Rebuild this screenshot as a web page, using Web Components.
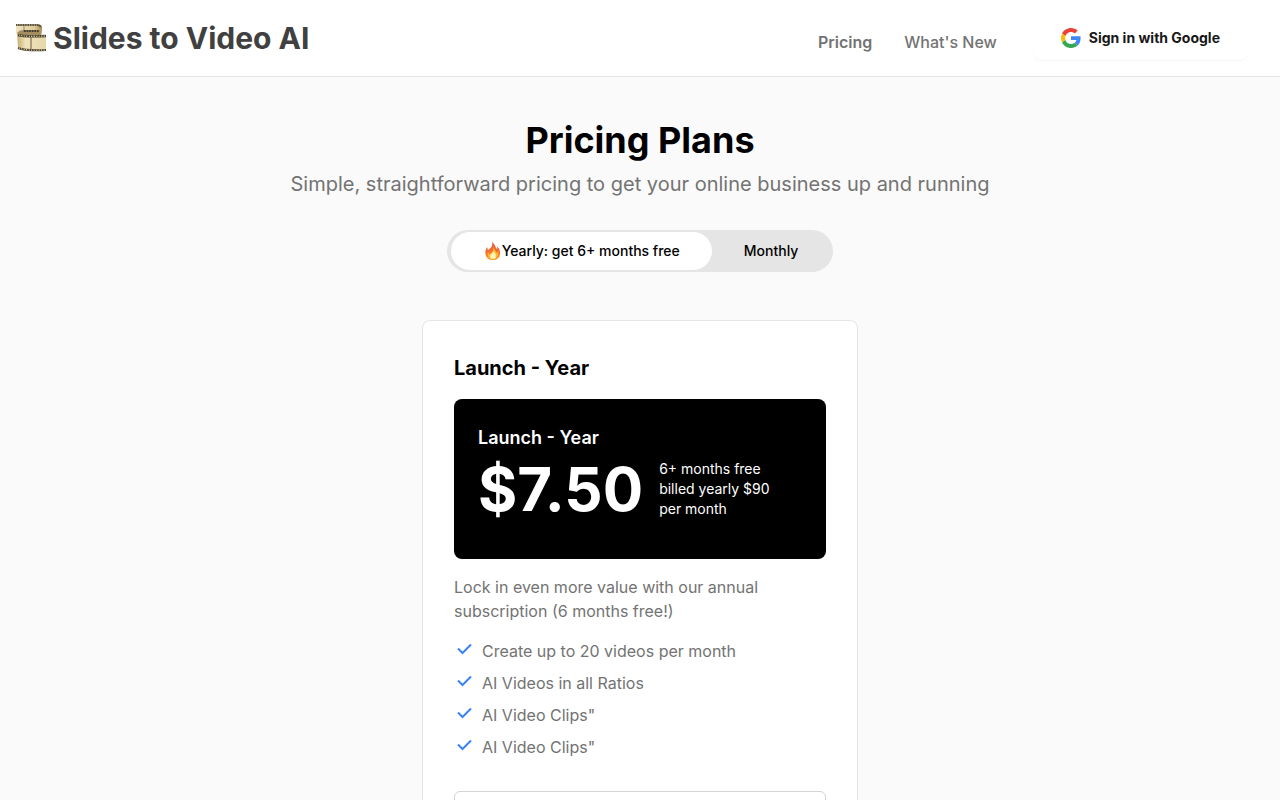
<!DOCTYPE html>
<html lang="en">
<head>
<meta charset="utf-8">
<meta name="viewport" content="width=device-width, initial-scale=1">
<title>Slides to Video AI - Pricing</title>
<style>
	body {
		margin: 0;
		background: #fafafa;
		color: #000;
		font-family: Inter, "Liberation Sans", sans-serif;
		font-size: 16px;
		line-height: 24px;
		--muted: #737373;
		--line: #e5e5e5;
	}
</style>
</head>
<body>
<site-header></site-header>
<pricing-page>
	<span slot="title">Pricing Plans</span>
	<span slot="subtitle">Simple, straightforward pricing to get your online business up and running</span>
	<plan-toggle slot="toggle"></plan-toggle>
	<plan-card name="Launch - Year" price="$7.50">
		<span slot="billing">6+ months free</span>
		<span slot="billing">billed yearly $90</span>
		<span slot="billing">per month</span>
		<span slot="description">Lock in even more value with our annual subscription (6 months free!)</span>
		<plan-feature>Create up to 20 videos per month</plan-feature>
		<plan-feature>AI Videos in all Ratios</plan-feature>
		<plan-feature>AI Video Clips"</plan-feature>
		<plan-feature>AI Video Clips"</plan-feature>
	</plan-card>
</pricing-page>

<script>
class SiteHeader extends HTMLElement {
	constructor() {
		super()
		this.attachShadow({ mode: 'open' })
		this.shadowRoot.innerHTML = `
			<style>
				:host {
					display: block;
					background: #fff;
					border-bottom: 1px solid var(--line);
				}
				header {
					display: flex;
					align-items: center;
					justify-content: space-between;
					height: 76px;
					padding: 0 32px 0 16px;
				}
				a {
					color: var(--muted);
					text-decoration: none;
				}
				.brand {
					display: flex;
					align-items: center;
					gap: 7px;
					color: #404040;
					font-size: 30px;
					font-weight: 700;
					line-height: 36px;
				}
				nav {
					display: flex;
					align-items: center;
					gap: 36px;
				}
				.links {
					display: flex;
					gap: 32px;
					padding-top: 8px;
				}
				.links a {
					font-weight: 500;
				}
				.links a.current {
					font-weight: 600;
				}
			</style>
			<header>
				<a class="brand" href="#"><film-icon></film-icon>Slides to Video AI</a>
				<nav>
					<div class="links">
						<a class="current" href="#pricing">Pricing</a>
						<a href="#news">What's New</a>
					</div>
					<google-button>Sign in with Google</google-button>
				</nav>
			</header>
		`
	}
}
customElements.define('site-header', SiteHeader)


class FilmIcon extends HTMLElement {
	constructor() {
		super()
		this.attachShadow({ mode: 'open' })
		this.shadowRoot.innerHTML = `
			<style>
				:host { display: block; }
				svg { display: block; }
			</style>
			<svg width="30" height="30" viewBox="0 0 30 30" aria-hidden="true">
				<defs>
					<linearGradient id="film" x1="0" x2="1" y1="0" y2="0">
						<stop offset="0" stop-color="#c8ac70"/>
						<stop offset=".3" stop-color="#f0e3bb"/>
						<stop offset="1" stop-color="#e6d7ab"/>
					</linearGradient>
					<linearGradient id="back" x1="0" x2="1" y1="0" y2="0">
						<stop offset="0" stop-color="#efe4c2"/>
						<stop offset=".7" stop-color="#dccb9b"/>
						<stop offset="1" stop-color="#a48c58"/>
					</linearGradient>
				</defs>
				<!-- upper strip, curling down at the right -->
				<path d="M0 1H21Q27 2 26 7L25 14H2L0 10Z" fill="url(#back)"/>
				<path d="M0 2H21Q24 2 25 4" fill="none" stroke="#5d503a" stroke-width="2"/>
				<path d="M1 2H21" fill="none" stroke="#f2e9cd" stroke-width="1.200" stroke-dasharray="1 1.400"/>
				<path d="M8 3V7" stroke="#a18b5c" stroke-width="1"/>
				<!-- inner loop -->
				<path d="M1 10Q3 7 8 7H24Q26 10 23 13H3Z" fill="#a48e60"/>
				<path d="M7 8H23" stroke="#43392a" stroke-width="2"/>
				<path d="M7 8H23" stroke="#d4c296" stroke-width="1" stroke-dasharray="1 1.600"/>
				<!-- front strip -->
				<path d="M1 9Q2 13 12 13L30 12V28H13Q4 28 2 25Z" fill="url(#film)"/>
				<path d="M2 12Q8 14 30 13" fill="none" stroke="#4a3f2d" stroke-width="2.400"/>
				<path d="M3 12Q9 14 30 13" fill="none" stroke="#f0e4c0" stroke-width="1.200" stroke-dasharray="1 1.500"/>
				<path d="M2 25Q10 28 30 27" fill="none" stroke="#4a3f2d" stroke-width="2"/>
				<path d="M3 25Q10 28 30 27" fill="none" stroke="#f0e4c0" stroke-width="1.200" stroke-dasharray="1 1.500"/>
				<path d="M15 14V26" stroke="#6d5b38" stroke-width="1"/>
			</svg>
		`
	}
}
customElements.define('film-icon', FilmIcon)


class GoogleButton extends HTMLElement {
	constructor() {
		super()
		this.attachShadow({ mode: 'open' })
		this.shadowRoot.innerHTML = `
			<style>
				:host { display: block; }
				button {
					display: flex;
					align-items: center;
					gap: 8px;
					height: 44px;
					padding: 0 28px;
					border: 0;
					border-radius: 8px;
					background: #fff;
					box-shadow: 0 1px 1px rgb(0 0 0 / 4%);
					color: #171717;
					font: 700 14px/20px Inter, "Liberation Sans", sans-serif;
					cursor: pointer;
				}
			</style>
			<button type="button">
				<svg width="20" height="20" viewBox="0 0 48 48" aria-hidden="true">
					<path fill="#EA4335" d="M24 9.500c3.540 0 6.710 1.220 9.210 3.600l6.850-6.850C35.900 2.380 30.470 0 24 0 14.620 0 6.510 5.380 2.560 13.220l7.980 6.190C12.430 13.720 17.740 9.500 24 9.500z"/>
					<path fill="#4285F4" d="M46.980 24.550c0-1.570-.150-3.090-.380-4.550H24v9.020h12.940c-.580 2.960-2.260 5.480-4.780 7.180l7.730 6c4.510-4.180 7.090-10.360 7.090-17.650z"/>
					<path fill="#FBBC05" d="M10.530 28.590c-.480-1.450-.760-2.990-.760-4.590s.270-3.140.760-4.590l-7.980-6.190C.920 16.460 0 20.120 0 24c0 3.880.920 7.540 2.560 10.780l7.970-6.190z"/>
					<path fill="#34A853" d="M24 48c6.480 0 11.930-2.130 15.890-5.810l-7.730-6c-2.150 1.450-4.920 2.300-8.160 2.300-6.260 0-11.570-4.220-13.470-9.910l-7.980 6.190C6.510 42.620 14.620 48 24 48z"/>
				</svg>
				<slot></slot>
			</button>
		`
	}
}
customElements.define('google-button', GoogleButton)


class PricingPage extends HTMLElement {
	constructor() {
		super()
		this.attachShadow({ mode: 'open' })
		this.shadowRoot.innerHTML = `
			<style>
				:host { display: block; }
				main {
					display: flex;
					flex-direction: column;
					align-items: center;
					padding: 43px 16px 48px;
				}
				h1 {
					margin: 0;
					font-size: 36px;
					font-weight: 700;
					line-height: 40px;
					text-align: center;
				}
				p {
					margin: 10px 0 0;
					color: var(--muted);
					font-size: 20px;
					line-height: 28px;
					text-align: center;
				}
				.toggle {
					margin: 32px 0 48px;
				}
				.plans {
					width: 100%;
					max-width: 436px;
				}
			</style>
			<main>
				<h1><slot name="title"></slot></h1>
				<p><slot name="subtitle"></slot></p>
				<div class="toggle"><slot name="toggle"></slot></div>
				<div class="plans"><slot></slot></div>
			</main>
		`
	}
}
customElements.define('pricing-page', PricingPage)


class PlanToggle extends HTMLElement {
	constructor() {
		super()
		this.attachShadow({ mode: 'open' })
		this.shadowRoot.innerHTML = `
			<style>
				:host { display: block; }
				div {
					display: flex;
					padding: 2px 3px 2px 4px;
					border-radius: 24px;
					background: var(--line);
				}
				button {
					display: flex;
					align-items: center;
					gap: 1px;
					height: 38px;
					padding: 0 32px;
					border: 0;
					border-radius: 20px;
					background: none;
					color: #000;
					font: 500 14px/20px Inter, "Liberation Sans", sans-serif;
					cursor: pointer;
				}
				button[aria-pressed="true"] {
					background: #fff;
				}
			</style>
			<div role="group" aria-label="Billing period">
				<button type="button" aria-pressed="true">
					<svg width="18" height="18" viewBox="0 0 18 18" aria-hidden="true">
						<defs>
							<linearGradient id="fire" x1="0" x2="0" y1="0" y2="1">
								<stop offset="0" stop-color="#e8553c"/>
								<stop offset=".6" stop-color="#f8702f"/>
								<stop offset="1" stop-color="#ffa52c"/>
							</linearGradient>
						</defs>
						<path fill="url(#fire)" d="M9 0C12 2 12 5 14 7C15 6 14 5 14 4C16 6 17.500 9 17 12C16.500 16 14 18 10 18C6 18 3 16 2.500 12C2 9 3 7 4 5C4.500 6 4.500 7 5 8C8 6 10 4 9 0Z"/>
						<path fill="#ffb62e" d="M10 5C12 7 12 9 14 11C15 10 15 9 15 8C16 12 15 17 10 17C6 17 4 14 5 10C6 11 6 12 7 12C9 10 11 9 10 5Z"/>
						<path fill="#fff3b0" d="M10 9C12 11 13 12 13 14C13 16 12 17 10 17C8 17 7 16 7 14C7 12 10 12 10 9Z"/>
					</svg>
					Yearly: get 6+ months free
				</button>
				<button type="button" aria-pressed="false">Monthly</button>
			</div>
		`
	}
	connectedCallback() {
		const buttons = this.shadowRoot.querySelectorAll('button')
		buttons.forEach(button => {
			button.addEventListener('click', () => {
				buttons.forEach(item => item.setAttribute('aria-pressed', item===button))
			})
		})
	}
}
customElements.define('plan-toggle', PlanToggle)


class PlanCard extends HTMLElement {
	constructor() {
		super()
		this.attachShadow({ mode: 'open' })
		this.shadowRoot.innerHTML = `
			<style>
				:host {
					display: block;
					padding: 31px;
					border: 1px solid var(--line);
					border-radius: 8px;
					background: #fff;
				}
				h2 {
					margin: 0;
					font-size: 20px;
					font-weight: 700;
					line-height: 32px;
				}
				.banner {
					margin: 15px 0 16px;
					padding: 24px 24px 34px;
					border-radius: 8px;
					background: #000;
					color: #fff;
				}
				h3 {
					margin: 0;
					font-size: 18px;
					font-weight: 600;
					line-height: 30px;
				}
				.amount {
					display: flex;
					align-items: center;
					gap: 16px;
				}
				.price {
					font-size: 60px;
					font-weight: 700;
					line-height: 72px;
				}
				.billing {
					display: flex;
					flex-direction: column;
					font-size: 14px;
					line-height: 20px;
				}
				p {
					margin: 0;
					color: var(--muted);
				}
				.features {
					display: flex;
					flex-direction: column;
					gap: 8px;
					margin: 16px 0 32px;
				}
				button {
					display: block;
					width: 100%;
					height: 42px;
					border: 1px solid #d4d4d4;
					border-radius: 6px;
					background: #fff;
				}
			</style>
			<h2></h2>
			<div class="banner">
				<h3></h3>
				<div class="amount">
					<div class="price"></div>
					<div class="billing"><slot name="billing"></slot></div>
				</div>
			</div>
			<p><slot name="description"></slot></p>
			<div class="features" role="list"><slot></slot></div>
			<button type="button" aria-label="Choose plan"></button>
		`
	}
	connectedCallback() {
		const name = this.getAttribute('name')
		this.shadowRoot.querySelector('h2').textContent = name
		this.shadowRoot.querySelector('h3').textContent = name
		this.shadowRoot.querySelector('.price').textContent = this.getAttribute('price')
	}
}
customElements.define('plan-card', PlanCard)


class PlanFeature extends HTMLElement {
	constructor() {
		super()
		this.attachShadow({ mode: 'open' })
		this.shadowRoot.innerHTML = `
			<style>
				:host {
					display: flex;
					align-items: flex-start;
					gap: 8px;
					color: var(--muted);
				}
				svg { flex: none; }
			</style>
			<svg width="20" height="20" viewBox="0 0 20 20" fill="none" stroke="#3b82f6" stroke-width="2" aria-hidden="true">
				<path d="M4 9.500L8.500 14L17 5.500"/>
			</svg>
			<span><slot></slot></span>
		`
	}
	connectedCallback() {
		this.setAttribute('role', 'listitem')
	}
}
customElements.define('plan-feature', PlanFeature)
</script>
</body>
</html>
